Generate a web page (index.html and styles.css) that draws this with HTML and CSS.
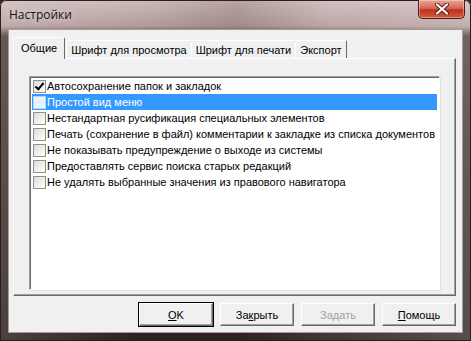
FILE: index.html
```html
<!DOCTYPE html>
<html lang="ru">
<head>
    <meta charset="UTF-8">
    <title>Настройки</title>
    <link rel="stylesheet" href="styles.css">
</head>
<body>
    <div class="window">
        <div class="titlebar">
            <span class="title">Настройки</span>
            <div class="close-btn">
                <svg width="16" height="12" viewBox="0 0 16 12">
                    <path d="M3 1.5 L13 10.5 M13 1.5 L3 10.5" stroke="#5a1a10" stroke-width="4" stroke-linecap="round"/>
                    <path d="M3 1.5 L13 10.5 M13 1.5 L3 10.5" stroke="#fff" stroke-width="2.2" stroke-linecap="round"/>
                </svg>
            </div>
        </div>
        <div class="client">
            <div class="tabs">
                <div class="tab active">Общие</div>
                <div class="tab">Шрифт для просмотра</div>
                <div class="tab">Шрифт для печати</div>
                <div class="tab">Экспорт</div>
            </div>
            <div class="panel">
                <div class="listbox">
                    <div class="row"><span class="check checked"></span>Автосохранение папок и закладок</div>
                    <div class="row selected"><span class="check"></span>Простой вид меню</div>
                    <div class="row"><span class="check"></span>Нестандартная русификация специальных элементов</div>
                    <div class="row"><span class="check"></span>Печать (сохранение в файл) комментарии к закладке из списка документов</div>
                    <div class="row"><span class="check"></span>Не показывать предупреждение о выходе из системы</div>
                    <div class="row"><span class="check"></span>Предоставлять сервис поиска старых редакций</div>
                    <div class="row"><span class="check"></span>Не удалять выбранные значения из правового навигатора</div>
                </div>
            </div>
            <div class="buttons">
                <div class="btn default"><u>O</u>K</div>
                <div class="btn">За<u>к</u>рыть</div>
                <div class="btn disabled">За<u>д</u>ать</div>
                <div class="btn"><u>П</u>омощь</div>
            </div>
        </div>
    </div>
</body>
</html>
```

FILE: styles.css
```css
body {
    margin: 0;
    width: 471px;
    height: 341px;
    overflow: hidden;
    background: #2a2020;
    font-family: 'Liberation Sans', Arial, sans-serif;
    font-size: 11px;
    color: #000;
}

.window {
    width: 471px;
    height: 341px;
    box-sizing: border-box;
    padding: 0 8px 8px 8px;
    display: flex;
    flex-direction: column;
    border-radius: 6px 6px 0 0;
    background:
        linear-gradient(90deg, rgba(255,255,255,0.15), rgba(255,255,255,0) 30%, rgba(60,30,30,0.15) 50%, rgba(255,255,255,0.1) 70%, rgba(255,255,255,0.2)),
        linear-gradient(180deg, #cdbcbb 0, #b39c9b 26px, #4e3c3a 36px, #3a2c2a 60%, #2c2020 100%);
    box-shadow: inset 0 0 0 1px #2a1e1e;
}

.titlebar {
    height: 29px;
    flex: none;
    display: flex;
    align-items: flex-start;
    position: relative;
}

.title {
    font-family: 'Open Sans', 'Noto Sans', sans-serif;
    font-size: 12px;
    color: #1a1010;
    margin: 6px 0 0 1px;
    text-shadow: 0 0 6px rgba(255,255,255,0.7);
}

.close-btn {
    position: absolute;
    top: 0;
    right: -2px;
    width: 47px;
    height: 19px;
    box-sizing: border-box;
    border: 1px solid #4a1c18;
    border-top: none;
    border-radius: 0 0 5px 5px;
    background: linear-gradient(180deg, #e8a594 0, #d46a55 45%, #c0321e 55%, #d85a3e 100%);
    display: flex;
    align-items: center;
    justify-content: center;
    box-shadow: inset 0 0 0 1px rgba(255,255,255,0.35);
}

.client {
    flex: 1;
    background: #f0f0f0;
    border: 1px solid #a89a98;
    display: flex;
    flex-direction: column;
    padding: 7px 6px 0 4px;
}

.tabs {
    display: flex;
    height: 21px;
    align-items: flex-end;
    padding-left: 2px;
    position: relative;
    z-index: 1;
}

.tab {
    height: 18px;
    box-sizing: border-box;
    padding: 3px 4px 0 4px;
    border: 1px solid #fff;
    border-right: 1px solid #696969;
    border-bottom: none;
    border-radius: 2px 2px 0 0;
    background: #f0f0f0;
    white-space: nowrap;
    margin-left: -1px;
}

.tab.active {
    height: 22px;
    margin: 0 0 -1px -2px;
    padding: 4px 7px 0 7px;
    z-index: 2;
    position: relative;
}

.tab.active + .tab {
    margin-left: 1px;
}

.panel {
    height: 238px;
    box-sizing: border-box;
    border: 1px solid #fff;
    border-right-color: #696969;
    border-bottom-color: #696969;
    box-shadow: inset -1px -1px 0 #a0a0a0;
    padding: 17px 15px 0 15px;
}

.listbox {
    height: 214px;
    box-sizing: border-box;
    background: #fff;
    border: 1px solid #a0a0a0;
    border-right-color: #fff;
    border-bottom-color: #fff;
    box-shadow: inset 1px 1px 0 #696969, 1px 1px 0 #e3e3e3;
    padding: 1px 2px 0 2px;
}

.row {
    height: 16px;
    display: flex;
    align-items: center;
    white-space: nowrap;
    overflow: hidden;
    padding-left: 1px;
}

.row.selected {
    background: #3399ff;
    color: #fff;
}

.check {
    width: 13px;
    height: 13px;
    box-sizing: border-box;
    border: 1px solid #8f8f8f;
    background: linear-gradient(135deg, #dcdcdc, #fff);
    margin-right: 1px;
    flex: none;
    position: relative;
}

.row.selected .check {
    border-color: #b8d8ff;
    background: #e8f2ff;
}

.check.checked::after {
    content: '';
    position: absolute;
    left: 3px;
    top: 0px;
    width: 3px;
    height: 7px;
    border: solid #000;
    border-width: 0 2px 2px 0;
    transform: rotate(40deg);
}

.buttons {
    display: flex;
    justify-content: flex-end;
    gap: 7px;
    padding: 7px 0 0 0;
}

.btn {
    width: 74px;
    height: 23px;
    box-sizing: border-box;
    border: 1px solid #fff;
    border-right-color: #696969;
    border-bottom-color: #696969;
    box-shadow: inset -1px -1px 0 #a0a0a0;
    display: flex;
    align-items: center;
    justify-content: center;
    font-size: 11px;
    font-family: 'Liberation Sans', Arial, sans-serif;
}

.btn.default {
    outline: 1px solid #000;
    outline-offset: 0;
}

.btn.disabled {
    color: #a0a0a0;
}
```
